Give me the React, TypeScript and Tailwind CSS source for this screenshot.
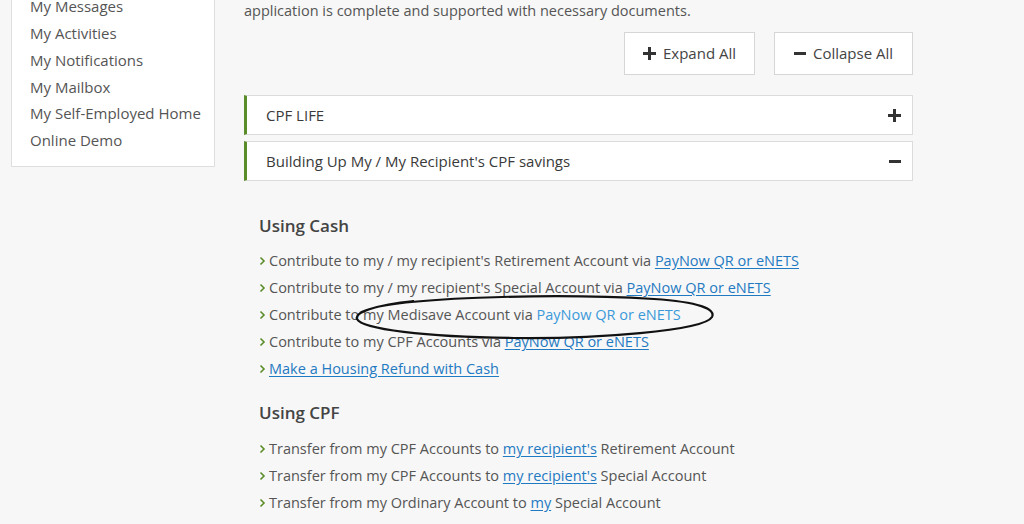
import React from 'react';

const FONT = "font-['Open_Sans','Noto_Sans',sans-serif]";

const SIDE_LINKS = ['My Messages', 'My Activities', 'My Notifications', 'My Mailbox', 'My Self-Employed Home', 'Online Demo'];

type Part = { t: string; link?: boolean; plain?: boolean };

const CASH_ITEMS: Part[][] = [
  [{ t: "Contribute to my / my recipient's Retirement Account via " }, { t: 'PayNow QR or eNETS', link: true }],
  [{ t: "Contribute to my / my recipient's Special Account via " }, { t: 'PayNow QR or eNETS', link: true }],
  [{ t: 'Contribute to my Medisave Account via ' }, { t: 'PayNow QR or eNETS', link: true, plain: true }],
  [{ t: 'Contribute to my CPF Accounts via ' }, { t: 'PayNow QR or eNETS', link: true }],
  [{ t: 'Make a Housing Refund with Cash', link: true }],
];

const CPF_ITEMS: Part[][] = [
  [{ t: 'Transfer from my CPF Accounts to ' }, { t: "my recipient's", link: true }, { t: ' Retirement Account' }],
  [{ t: 'Transfer from my CPF Accounts to ' }, { t: "my recipient's", link: true }, { t: ' Special Account' }],
  [{ t: 'Transfer from my Ordinary Account to ' }, { t: 'my', link: true }, { t: ' Special Account' }],
];

function Chevron() {
  return (
    <svg className="h-[10px] w-[7px] shrink-0 mr-[3px]" viewBox="0 0 7 10" fill="none">
      <path d="M1.5 1.5 L5 5 L1.5 8.5" stroke="#5b8c2a" strokeWidth="1.6" />
    </svg>
  );
}

function LinkList({ items }: { items: Part[][] }) {
  return (
    <ul className="flex flex-col">
      {items.map((parts, i) => (
        <li key={i} className="flex items-center h-[27px] text-[14.5px] text-[#555]">
          <Chevron />
          <span className="whitespace-nowrap">
            {parts.map((p, j) =>
              p.link ? (
                <a
                  key={j}
                  className={p.plain ? 'text-[#3a9ad9]' : 'text-[#1f7ac2] underline underline-offset-2'}
                >
                  {p.t}
                </a>
              ) : (
                <span key={j}>{p.t}</span>
              )
            )}
          </span>
        </li>
      ))}
    </ul>
  );
}

function PlusIcon() {
  return (
    <svg className="h-[13px] w-[13px]" viewBox="0 0 13 13">
      <path d="M5 0h3v5h5v3H8v5H5V8H0V5h5z" fill="#333" />
    </svg>
  );
}

function MinusIcon() {
  return (
    <svg className="h-[13px] w-[12px]" viewBox="0 0 12 13">
      <rect x="0" y="5" width="12" height="3" fill="#333" />
    </svg>
  );
}

export default function App() {
  return (
    <div className={`${FONT} w-[1024px] h-[524px] overflow-hidden bg-[#f7f7f7] flex items-start`}>
      {/* sidebar */}
      <aside className="ml-[11px] mt-[-16px] w-[204px] bg-white border border-[#dedede] pl-[18px] pt-[8px] pb-[12px]">
        <ul className="flex flex-col">
          {SIDE_LINKS.map((l) => (
            <li key={l} className="h-[26.8px] flex items-center text-[15px] text-[#555]">
              {l}
            </li>
          ))}
        </ul>
      </aside>

      {/* main */}
      <main className="ml-[29px] w-[669px] flex flex-col">
        <p className="text-[14.5px] text-[#555] h-[22px] leading-[22px]">
          application is complete and supported with necessary documents.
        </p>
        <div className="flex justify-end gap-[19px] mt-[10px]">
          <button className="h-[43px] w-[131px] bg-white border border-[#d6d6d6] flex items-center justify-center gap-[7px] text-[15px] text-[#444]">
            <PlusIcon />
            Expand All
          </button>
          <button className="h-[43px] w-[139px] bg-white border border-[#d6d6d6] flex items-center justify-center gap-[7px] text-[15px] text-[#444]">
            <MinusIcon />
            Collapse All
          </button>
        </div>

        <div className="mt-[20px] flex flex-col gap-[6px]">
          <div className="h-[40px] bg-white border border-[#dcdcdc] border-l-[3px] border-l-[#5b8c2a] flex items-center justify-between pl-[19px] pr-[11px]">
            <span className="text-[15px] font-medium text-[#3a3a3a]">CPF LIFE</span>
            <PlusIcon />
          </div>
          <div className="h-[40px] bg-white border border-[#dcdcdc] border-l-[3px] border-l-[#5b8c2a] flex items-center justify-between pl-[19px] pr-[11px]">
            <span className="text-[15px] font-medium text-[#3a3a3a]">Building Up My / My Recipient's CPF savings</span>
            <MinusIcon />
          </div>
        </div>

        <div className="relative pl-[15px] pt-[33px]">
          <h3 className="text-[17px] font-semibold text-[#444] h-[24px] leading-[24px] mb-[9px]">Using Cash</h3>
          <LinkList items={CASH_ITEMS} />
          <h3 className="text-[17px] font-semibold text-[#444] h-[24px] leading-[24px] mt-[19px] mb-[10px]">Using CPF</h3>
          <LinkList items={CPF_ITEMS} />

          {/* hand-drawn ellipse annotation */}
          <svg className="absolute left-[110px] top-[112px] w-[364px] h-[48px] pointer-events-none" viewBox="0 0 364 48" fill="none">
            <path
              d="M6 20 C 30 4, 200 0, 300 6 C 345 9, 362 16, 358 24 C 350 38, 240 46, 160 45 C 70 44, 8 36, 3 26 C 0 20, 20 12, 60 8"
              stroke="#111"
              strokeWidth="2.2"
            />
          </svg>
        </div>
      </main>
    </div>
  );
}
